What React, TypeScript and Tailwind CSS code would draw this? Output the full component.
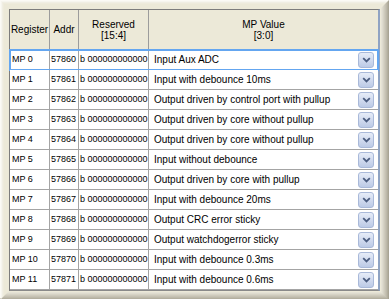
import type { ReactNode } from 'react';

type Row = {
  reg: string;
  addr: string;
  value: string;
};

const rows: Row[] = [
  { reg: 'MP 0', addr: '57860', value: 'Input Aux ADC' },
  { reg: 'MP 1', addr: '57861', value: 'Input with debounce 10ms' },
  { reg: 'MP 2', addr: '57862', value: 'Output driven by control port with pullup' },
  { reg: 'MP 3', addr: '57863', value: 'Output driven by core without pullup' },
  { reg: 'MP 4', addr: '57864', value: 'Output driven by core without pullup' },
  { reg: 'MP 5', addr: '57865', value: 'Input without debounce' },
  { reg: 'MP 6', addr: '57866', value: 'Output driven by core with pullup' },
  { reg: 'MP 7', addr: '57867', value: 'Input with debounce 20ms' },
  { reg: 'MP 8', addr: '57868', value: 'Output CRC error sticky' },
  { reg: 'MP 9', addr: '57869', value: 'Output watchdogerror sticky' },
  { reg: 'MP 10', addr: '57870', value: 'Input with debounce 0.3ms' },
  { reg: 'MP 11', addr: '57871', value: 'Input with debounce 0.6ms' },
];

// raised frame, outer ring first
const bevel = [
  'border border-t-[#fbfaf5] border-l-[#fbfaf5] border-r-[#a8a494] border-b-[#a8a494]',
  'border border-t-[#f6f5ee] border-l-[#f6f5ee] border-r-[#b3af9f] border-b-[#b3af9f]',
  'border border-t-[#f0eee3] border-l-[#f0eee3] border-r-[#bdb9aa] border-b-[#bdb9aa]',
  'border border-t-[#eeebdc] border-l-[#eeebdc] border-r-[#c6c2b3] border-b-[#c6c2b3]',
  'border border-t-[#ece9d8] border-l-[#ece9d8] border-r-[#cecabc] border-b-[#cecabc]',
  'border border-t-[#ece9d8] border-l-[#ece9d8] border-r-[#d6d3c5] border-b-[#d6d3c5]',
  'border border-t-[#ece9d8] border-l-[#ece9d8] border-r-[#dedbce] border-b-[#dedbce]',
  'border border-t-[#ece9d8] border-l-[#ece9d8] border-r-[#e5e2d5] border-b-[#e5e2d5]',
];

function Bevel({ level, children }: { level: number; children: ReactNode }) {
  if (level >= bevel.length) return <>{children}</>;
  return (
    <div className={`flex flex-col flex-1 ${bevel[level]}`}>
      <Bevel level={level + 1}>{children}</Bevel>
    </div>
  );
}

function DropButton() {
  return (
    <div className="w-4 h-4 shrink-0 rounded-[3px] border border-[#a9b9d9] bg-gradient-to-b from-[#e6ecf8] to-[#bccae6] flex items-center justify-center">
      <svg width="9" height="6" viewBox="0 0 9 6">
        <polyline points="1.2,1.2 4.5,4.4 7.8,1.2" fill="none" stroke="#4b5d80" strokeWidth="1.8" />
      </svg>
    </div>
  );
}

export default function App() {
  return (
    <div
      className="w-[389px] h-[299px] flex bg-[#ece9d8] text-black"
      style={{ fontFamily: '"Liberation Sans", Arial, sans-serif' }}
    >
      <Bevel level={0}>
        <div className="flex-1 p-px">
          <div className="flex flex-col border-l border-t border-b border-r-2 border-l-[#7c7c7c] border-t-[#7c7c7c] border-b-[#8a8a8a] border-r-[#8fa3c3]">
            {/* header */}
            <div className="flex h-10 bg-[#ece9d8] text-[10px] leading-[11px] border-b border-[#9c9c9c]">
              <div className="w-10 shrink-0 border-r border-[#9c9c9c] flex items-center justify-center">Register</div>
              <div className="w-[29px] shrink-0 border-r border-[#9c9c9c] flex items-center justify-center">Addr</div>
              <div className="w-[70px] shrink-0 border-r border-[#9c9c9c] flex flex-col items-center justify-center">
                <span>Reserved</span>
                <span>[15:4]</span>
              </div>
              <div className="flex-1 flex flex-col items-center justify-center">
                <span>MP Value</span>
                <span>[3:0]</span>
              </div>
            </div>

            {rows.map((row, index) => (
              <div
                key={row.reg}
                className={`flex h-5 bg-white border-b border-[#a4a4a4] ${
                  index === 0 ? 'outline-2 outline-[#64a6f0] -outline-offset-1' : ''
                }`}
              >
                <div className="w-10 shrink-0 border-r border-[#a4a4a4] flex items-center pl-[2px] text-[9px]">{row.reg}</div>
                <div className="w-[29px] shrink-0 border-r border-[#a4a4a4] flex items-center pl-[1px] text-[9px]">{row.addr}</div>
                <div className="w-[70px] shrink-0 border-r border-[#a4a4a4] flex items-center pl-[1px] text-[9px] whitespace-nowrap overflow-hidden">
                  b 000000000000
                </div>
                <div className="flex-1 flex items-center justify-between pl-[5px] pr-1 text-[10px] whitespace-nowrap">
                  <span>{row.value}</span>
                  <DropButton />
                </div>
              </div>
            ))}
          </div>
        </div>
      </Bevel>
    </div>
  );
}
